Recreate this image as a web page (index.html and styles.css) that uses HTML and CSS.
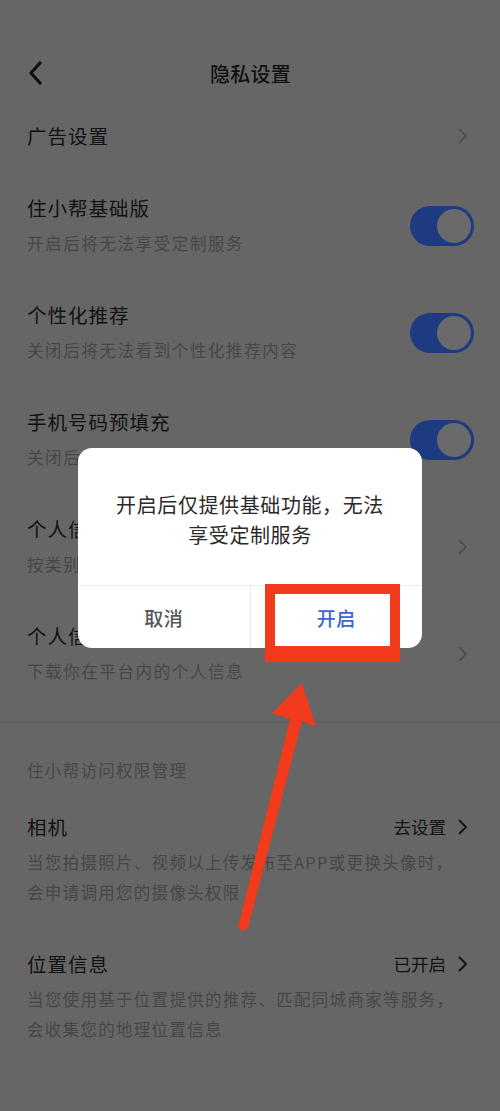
FILE: index.html
```html
<!DOCTYPE html>
<html lang="zh-CN">
<head>
<meta charset="utf-8">
<title>隐私设置</title>
<link rel="stylesheet" href="styles.css">
</head>
<body>
<div class="page">
  <header class="nav">
    <svg class="back" width="16" height="24" viewBox="0 0 16 24"><polyline points="13,2 4,12 13,22" fill="none" stroke="#0e0e0e" stroke-width="3.2" stroke-linecap="round" stroke-linejoin="round"/></svg>
    <div class="nav-title">隐私设置</div>
  </header>

  <div class="row row-simple">
    <div class="title">广告设置</div>
    <svg class="chev" width="10" height="16" viewBox="0 0 10 16"><polyline points="1.5,1.5 8,8 1.5,14.5" fill="none" stroke="#4a4a4a" stroke-width="1.6" stroke-linecap="round" stroke-linejoin="round"/></svg>
  </div>

  <div class="row row-sub">
    <div class="texts">
      <div class="title">住小帮基础版</div>
      <div class="desc">开启后将无法享受定制服务</div>
    </div>
    <div class="switch"><div class="knob"></div></div>
  </div>

  <div class="row row-sub">
    <div class="texts">
      <div class="title">个性化推荐</div>
      <div class="desc">关闭后将无法看到个性化推荐内容</div>
    </div>
    <div class="switch"><div class="knob"></div></div>
  </div>

  <div class="row row-sub">
    <div class="texts">
      <div class="title">手机号码预填充</div>
      <div class="desc">关闭后将无法自动填充手机号码</div>
    </div>
    <div class="switch"><div class="knob"></div></div>
  </div>

  <div class="row row-sub">
    <div class="texts">
      <div class="title">个人信息收集清单</div>
      <div class="desc">按类别查看收集的个人信息</div>
    </div>
    <svg class="chev" width="10" height="16" viewBox="0 0 10 16"><polyline points="1.5,1.5 8,8 1.5,14.5" fill="none" stroke="#4a4a4a" stroke-width="1.6" stroke-linecap="round" stroke-linejoin="round"/></svg>
  </div>

  <div class="row row-sub">
    <div class="texts">
      <div class="title">个人信息下载</div>
      <div class="desc">下载你在平台内的个人信息</div>
    </div>
    <svg class="chev" width="10" height="16" viewBox="0 0 10 16"><polyline points="1.5,1.5 8,8 1.5,14.5" fill="none" stroke="#4a4a4a" stroke-width="1.6" stroke-linecap="round" stroke-linejoin="round"/></svg>
  </div>

  <div class="divider"></div>

  <div class="section">住小帮访问权限管理</div>

  <div class="perm">
    <div class="perm-head">
      <div class="title">相机</div>
      <div class="perm-state">去设置<svg class="chev-dark" width="10" height="16" viewBox="0 0 10 16"><polyline points="1.5,1.5 8,8 1.5,14.5" fill="none" stroke="#141414" stroke-width="1.8" stroke-linecap="round" stroke-linejoin="round"/></svg></div>
    </div>
    <div class="perm-desc">当您拍摄照片、视频以上传发布至APP或更换头像时，<br>会申请调用您的摄像头权限</div>
  </div>

  <div class="perm">
    <div class="perm-head">
      <div class="title">位置信息</div>
      <div class="perm-state">已开启<svg class="chev-dark" width="10" height="16" viewBox="0 0 10 16"><polyline points="1.5,1.5 8,8 1.5,14.5" fill="none" stroke="#141414" stroke-width="1.8" stroke-linecap="round" stroke-linejoin="round"/></svg></div>
    </div>
    <div class="perm-desc">当您使用基于位置提供的推荐、匹配同城商家等服务，<br>会收集您的地理位置信息</div>
  </div>
</div>

<div class="overlay">
  <div class="dialog">
    <div class="dialog-msg">开启后仅提供基础功能，无法<br>享受定制服务</div>
    <div class="dialog-btns">
      <div class="btn btn-cancel">取消</div>
      <div class="btn btn-ok">开启</div>
    </div>
  </div>
</div>

<div class="highlight"></div>
<svg class="arrow" width="500" height="1111" viewBox="0 0 500 1111">
  <polygon points="302,683 316,727 302,721 248,928 242,931 238,927 290,719 272,713" fill="#f23a1c"/>
</svg>
</body>
</html>
```
FILE: styles.css
```css
* { box-sizing: border-box; }
html, body {
  margin: 0;
  padding: 0;
  background: #666666;
}
body {
  width: 500px;
  height: 1111px;
  overflow: hidden;
  position: relative;
  font-family: "Noto Sans CJK SC", "Noto Sans", sans-serif;
  color: #141414;
}
.page {
  padding: 0 26px 0 27px;
}
.nav {
  margin-top: 48px;
  height: 50px;
  display: flex;
  align-items: center;
  justify-content: center;
  position: relative;
}
.back {
  position: absolute;
  left: 0;
  top: 13px;
}
.nav-title {
  font-size: 20px;
  font-weight: 500;
  letter-spacing: 0.3px;
  color: #111;
}
.row {
  display: flex;
  align-items: center;
  justify-content: space-between;
}
.row-simple {
  height: 76px;
}
.row-sub {
  height: 107px;
  padding: 20px 0 24px;
}
.title {
  font-size: 19.5px;
  line-height: 28px;
  letter-spacing: 1px;
  color: #121212;
}
.desc {
  margin-top: 7px;
  font-size: 16.5px;
  line-height: 28px;
  letter-spacing: 1.6px;
  color: #464646;
}
.texts {
  display: flex;
  flex-direction: column;
}
.chev {
  margin-right: 6px;
  flex: none;
}
.switch {
  width: 64px;
  height: 40px;
  border-radius: 20px;
  background: #1e3a80;
  padding: 3px;
  display: flex;
  justify-content: flex-end;
  flex: none;
}
.knob {
  width: 34px;
  height: 34px;
  border-radius: 50%;
  background: #6a6a6a;
}
.divider {
  margin: 13px -27px 0;
  height: 1px;
  background: #5e5e5e;
}
.section {
  margin-top: 33px;
  font-size: 16.5px;
  line-height: 28px;
  letter-spacing: 1.3px;
  color: #474747;
}
.perm {
  padding: 29px 0 14px;
}
.perm-head {
  display: flex;
  justify-content: space-between;
  align-items: center;
}
.perm-state {
  display: flex;
  align-items: center;
  font-size: 17.5px;
  line-height: 28px;
  color: #141414;
  margin-right: 6px;
}
.chev-dark {
  margin-left: 12px;
}
.perm-desc {
  margin-top: 6px;
  font-size: 16.5px;
  line-height: 30px;
  letter-spacing: 1.3px;
  color: #464646;
  white-space: nowrap;
}
.overlay {
  position: absolute;
  inset: 0;
  display: flex;
  justify-content: center;
  align-items: flex-start;
  padding-top: 448px;
}
.dialog {
  width: 344px;
  height: 200px;
  background: #fff;
  border-radius: 14px;
  overflow: hidden;
  display: flex;
  flex-direction: column;
}
.dialog-msg {
  padding: 42px 0 35px;
  text-align: center;
  font-size: 20px;
  line-height: 30px;
  letter-spacing: 0.6px;
  color: #2a2a2a;
  border-bottom: 1px solid #ececec;
}
.dialog-btns {
  flex: 1;
  display: flex;
}
.btn {
  flex: 1;
  display: flex;
  align-items: center;
  justify-content: center;
  font-size: 19px;
  font-weight: 500;
  letter-spacing: 0.5px;
}
.btn-cancel {
  color: #555;
  border-right: 1px solid #ececec;
}
.btn-ok {
  color: #3a66cf;
}
.highlight {
  position: absolute;
  left: 265px;
  top: 584px;
  width: 135px;
  height: 78px;
  border: 10px solid #f23a1c;
  border-bottom-width: 16px;
}
.arrow {
  position: absolute;
  left: 0;
  top: 0;
}
```
